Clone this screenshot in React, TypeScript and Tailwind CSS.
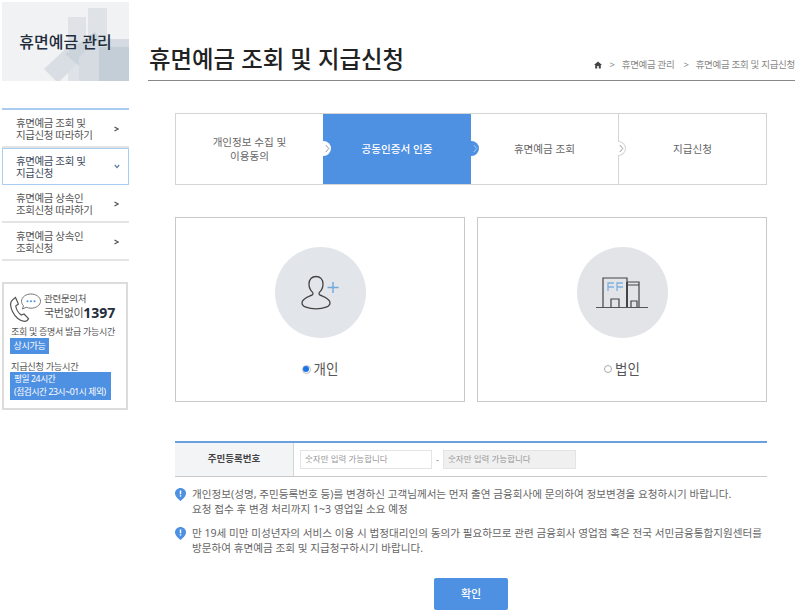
const font = { fontFamily: '"Noto Sans", "Noto Sans CJK KR", sans-serif' };

function NavItem({ lines, active }: { lines: string[]; active?: boolean }) {
  return (
    <div
      className={
        active
          ? "flex items-center justify-between h-[37px] pl-[13px] pr-[8px] border border-[#a9cdf0] text-[#3d4a5c]"
          : "flex items-center justify-between h-[38px] pt-[1px] pl-[14px] pr-[10px] border-b-2 border-[#e4e4e4] text-[#555]"
      }
    >
      <div className="text-[10.5px] leading-[12px] tracking-[-0.4px]">
        {lines.map((l) => (
          <div key={l}>{l}</div>
        ))}
      </div>
      {active ? (
        <svg width="6" height="5" viewBox="0 0 6 5"><path d="M.8 1l2.200 2.600L5.200 1" fill="none" stroke="#5b7a9a" strokeWidth="1.200" /></svg>
      ) : (
        <svg width="5" height="6" viewBox="0 0 5 6"><path d="M.5 1l3.600 2-3.600 2" fill="none" stroke="#555" strokeWidth="1.200" /></svg>
      )}
    </div>
  );
}

function Chevron({ color }: { color: string }) {
  return (
    <svg width="5" height="9" viewBox="0 0 5 9"><path d="M.8 1l3 3.500-3 3.500" fill="none" stroke={color} strokeWidth="1" /></svg>
  );
}

function Step({ children, active, w, badge }: { children: React.ReactNode; active?: boolean; w: string; badge?: "white" | "blue" | "line" }) {
  return (
    <div className={`relative flex items-center justify-center text-center text-[10.6px] leading-[14px] ${w} ${active ? "bg-[#4e90e2] text-white font-medium" : "text-[#666]"}`}>
      {children}
      {badge === "white" && (
        <span className="absolute z-10 right-[-8px] top-[27px] flex h-[15px] w-[8px] items-center justify-center rounded-r-full bg-white">
          <Chevron color="#999" />
        </span>
      )}
      {badge === "blue" && (
        <span className="absolute z-10 right-[-8px] top-[27px] flex h-[15px] w-[8px] items-center justify-center rounded-r-full bg-[#4e90e2]">
          <Chevron color="#a9cbf2" />
        </span>
      )}
      {badge === "line" && (
        <span className="absolute z-10 right-[-8px] top-[27px] flex h-[15px] w-[8px] items-center justify-center rounded-r-full border border-l-0 border-[#d4d4d4] bg-white">
          <Chevron color="#999" />
        </span>
      )}
    </div>
  );
}

function InfoIcon() {
  return (
    <svg width="11" height="13" viewBox="0 0 11 13" className="mt-[1px] shrink-0">
      <path d="M5.500 0C2.500 0 0 2.400 0 5.300c0 3 3 5.600 5.500 7.700C8 10.900 11 8.300 11 5.300 11 2.400 8.500 0 5.500 0z" fill="#4e90e2" />
      <rect x="4.800" y="2.500" width="1.400" height="3.800" fill="#fff" />
      <rect x="4.800" y="7.200" width="1.400" height="1.400" fill="#fff" />
    </svg>
  );
}

export default function App() {
  return (
    <div className="flex w-[800px] h-[611px] overflow-hidden bg-white" style={font}>
      <aside className="w-[127px] ml-[2px] pt-[2px] shrink-0">
        <div className="relative h-[79px] overflow-hidden bg-[#f1f2f3] flex items-center justify-center">
          <svg className="absolute inset-0" width="127" height="79" viewBox="0 0 127 79">
            <path d="M66 15h18v64H66z" fill="#dfe3e7" />
            <path d="M86 6h19v73H86z" fill="#dfe3e7" />
            <path d="M42 67l32-30 14 12-30 30H54z" fill="#d8dee3" />
            <path d="M63 52l30-22 14 18-25 20z" fill="#ccd4db" />
            <path d="M77 79V55l20-18h30v42z" fill="#d5dbe1" />
            <path d="M97 79V45h30v34z" fill="#c4ced7" />
          </svg>
          <span className="relative text-[16px] font-medium text-[#222d3d]">휴면예금 관리</span>
        </div>
        <nav className="mt-[27px] border-t-2 border-[#a9cdf0]">
          <NavItem lines={["휴면예금 조회 및", "지급신청 따라하기"]} />
          <NavItem active lines={["휴면예금 조회 및", "지급신청"]} />
          <NavItem lines={["휴면예금 상속인", "조회신청 따라하기"]} />
          <NavItem lines={["휴면예금 상속인", "조회신청"]} />
        </nav>
        <div className="mt-[21px] h-[128px] w-[126px] border-2 border-[#dcdcdc] px-[6px] pt-[9px] text-[#555]">
          <div className="flex items-start">
            <svg width="31" height="29" viewBox="0 0 31 29" className="shrink-0">
              <path d="M3 6.500C0 8.500 0 13 2.500 18.500c2.600 5.500 7.500 9.800 12 9.800 1.700 0 3.300-1 4-2.600l-4.500-4.700-2.800 1c-2.500-1.800-4.800-5.500-5.500-9l2.700-2-2.900-6.500z" fill="none" stroke="#555" strokeWidth="1.200" />
              <path d="M21 1c-5 0-9.500 3-9.500 7.300 0 1.800.9 3.400 2 4.500l-1.200 3.200 4-1.700c1.500.6 3.100.9 4.700.9 5 0 9.500-3 9.500-6.900C30.500 4 26 1 21 1z" fill="none" stroke="#777" strokeWidth="1" />
              <circle cx="17.500" cy="8.300" r="1" fill="#4e90e2" />
              <circle cx="21" cy="8.300" r="1" fill="#4e90e2" />
              <circle cx="24.500" cy="8.300" r="1" fill="#4e90e2" />
            </svg>
            <div className="ml-[3px] tracking-[-0.300px]">
              <div className="text-[9.500px] leading-[12px]">관련문의처</div>
              <div className="flex items-center leading-[16px] text-[11px]">
                국번없이<b className="text-[14px] font-bold text-[#222d3d] tracking-normal">1397</b>
              </div>
            </div>
          </div>
          <div className="mt-[4px] ml-[1px] whitespace-nowrap text-[9px] leading-[12px] tracking-[-0.300px]">조회 및 증명서 발급 가능시간</div>
          <div className="w-[39px] bg-[#4e90e2] text-center text-[9px] leading-[16px] tracking-[-0.300px] text-white">상시가능</div>
          <div className="mt-[7px] ml-[1px] text-[9.200px] leading-[11px] tracking-[-0.300px]">지급신청 가능시간</div>
          <div className="w-[101px] whitespace-nowrap bg-[#4e90e2] px-[4px] py-[1px] text-[8.700px] leading-[13px] tracking-[-0.400px] text-white">
            평일 24시간
            <br />
            (점검시간 23시~01시 제외)
          </div>
        </div>
      </aside>

      <main className="ml-[19px] w-[647px] shrink-0">
        <header className="mt-[41px] h-[40px] flex items-center justify-between border-b border-[#888] pb-[3px]">
          <h1 className="text-[23.400px] font-medium text-[#222] leading-[36px] ml-[1px]">휴면예금 조회 및 지급신청</h1>
          <div className="mt-[12px] flex items-center text-[9.500px] text-[#888] whitespace-nowrap tracking-[-0.300px]">
            <svg width="8" height="8" viewBox="0 0 8 8" className="mr-[8px]"><path d="M4 .5L0 4h1.200v3.500h2V5h1.600v2.500h2V4H8z" fill="#444" /></svg>
            <span>&gt;</span>
            <span className="ml-[7px]">휴면예금 관리</span>
            <span className="ml-[9px]">&gt;</span>
            <span className="ml-[7px]">휴면예금 조회 및 지급신청</span>
          </div>
        </header>

        <div className="ml-[27px] w-[592px]">
          <div className="mt-[32px] flex h-[72px] border border-[#d4d4d4]">
            <Step w="w-[147px]" badge="white">
              <span>개인정보 수집 및<br />이용동의</span>
            </Step>
            <Step w="w-[148px]" active badge="blue">공동인증서 인증</Step>
            <Step w="w-[148px] border-r border-[#d4d4d4]" badge="line">휴면예금 조회</Step>
            <Step w="flex-1">지급신청</Step>
          </div>

          <div className="mt-[32px] grid grid-cols-2 gap-[12px]">
            <div className="h-[185px] border border-[#c9c9c9] flex flex-col items-center pt-[29px]">
              <div className="flex h-[91px] w-[91px] items-center justify-center rounded-full bg-[#e2e5e9]">
                <svg width="38" height="36" viewBox="0 0 38 36">
                  <path d="M15 1.500c-4.200 0-7 3-7 7.500 0 3.600 1.600 6.500 3.600 8.400.5.500.5 2-.3 2.500-3 1.500-10.300 3.300-10.300 8 0 3.500 6 6 14 6 8 0 14-2.500 14-6 0-4.700-7.300-6.500-10.300-8-.8-.5-.8-2-.3-2.500 2-1.900 3.600-4.800 3.600-8.400C22 4.500 19.200 1.500 15 1.500z" fill="none" stroke="#444" strokeWidth="1.300" />
                  <path d="M32 7v11M26.500 12.500h11" stroke="#6fa8dc" strokeWidth="1.400" />
                </svg>
              </div>
              <label className="mt-[23px] flex items-center text-[13.500px] leading-[16px] text-[#555]">
                <span className="mr-[3px] flex h-[9px] w-[9px] items-center justify-center rounded-full border border-[#bbb]"><span className="h-[6px] w-[6px] rounded-full bg-[#1a73e8]" /></span>
                개인
              </label>
            </div>
            <div className="h-[185px] border border-[#c9c9c9] flex flex-col items-center pt-[29px]">
              <div className="flex h-[91px] w-[91px] items-center justify-center rounded-full bg-[#e2e4e8]">
                <svg width="52" height="34" viewBox="0 0 52 34">
                  <path d="M7 31V2h24v29" fill="none" stroke="#444" strokeWidth="1.200" />
                  <path d="M31 6h12v25M31 9h12" fill="none" stroke="#444" strokeWidth="1.200" />
                  <path d="M31 6v25" stroke="#444" strokeWidth="2" />
                  <path d="M15 31V23h8v8M35 31v-6h6v6" fill="none" stroke="#444" strokeWidth="1.200" />
                  <path d="M0 31.500h52" stroke="#555" strokeWidth="1.200" />
                  <path d="M18 7h-6v8M18 11h-6M27 7h-6v8M27 11h-6" fill="none" stroke="#7fb0e0" strokeWidth="1.300" />
                </svg>
              </div>
              <label className="mt-[23px] flex items-center text-[13.500px] leading-[16px] text-[#555]">
                <span className="mr-[3px] h-[8px] w-[8px] rounded-full border border-[#aaa]" />
                법인
              </label>
            </div>
          </div>

          <div className="mt-[39px] flex h-[36px] items-center border-t-2 border-b border-t-[#6aa0e0] border-b-[#c9c9c9]">
            <div className="flex h-full w-[119px] items-center justify-center border-r border-[#d4d4d4] bg-[#f3f4f6] text-[9.500px] font-bold text-[#444]">주민등록번호</div>
            <div className="ml-[6px] flex h-[19px] w-[132px] items-center border border-[#e4e4e4] pl-[4px] text-[8.500px] text-[#999]">숫자만 입력 가능합니다</div>
            <span className="mx-[4px] w-[3px] text-[9px] text-[#888]">-</span>
            <div className="flex h-[19px] w-[133px] items-center border border-[#e4e4e4] bg-[#f0f0f0] pl-[4px] text-[8.500px] text-[#999]">숫자만 입력 가능합니다</div>
          </div>

          <div className="mt-[10px] flex text-[10.600px] leading-[15px] text-[#666]">
            <InfoIcon />
            <p className="ml-[6px] whitespace-nowrap">
              개인정보(성명, 주민등록번호 등)를 변경하신 고객님께서는 먼저 출연 금융회사에 문의하여 정보변경을 요청하시기 바랍니다.
              <br />
              요청 접수 후 변경 처리까지 1~3 영업일 소요 예정
            </p>
          </div>
          <div className="mt-[9px] flex text-[10.600px] leading-[15px] text-[#666]">
            <InfoIcon />
            <p className="ml-[6px] whitespace-nowrap">
              만 19세 미만 미성년자의 서비스 이용 시 법정대리인의 동의가 필요하므로 관련 금융회사 영업점 혹은 전국 서민금융통합지원센터를
              <br />
              방문하여 휴면예금 조회 및 지급청구하시기 바랍니다.
            </p>
          </div>

          <div className="mt-[22px] flex justify-center">
            <button className="h-[32px] w-[74px] rounded-[2px] bg-[#4e90e2] text-[11px] font-medium text-white">확인</button>
          </div>
        </div>
      </main>
    </div>
  );
}
